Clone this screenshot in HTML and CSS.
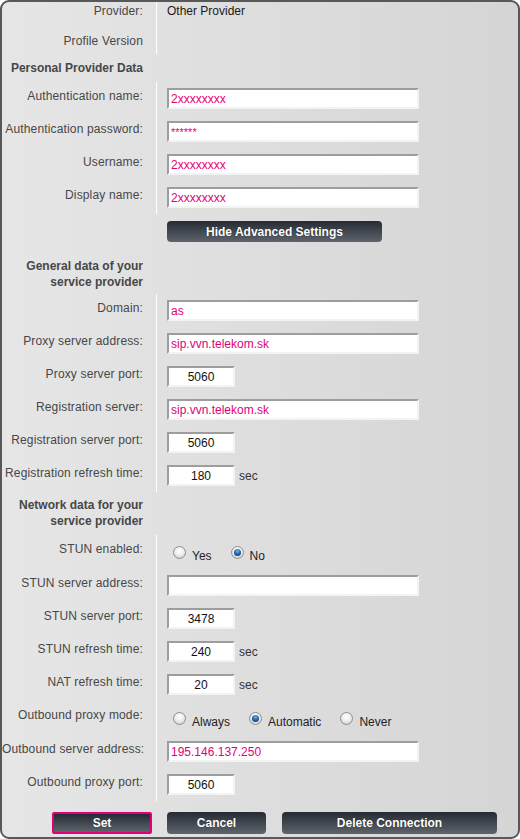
FILE: index.html
```html
<!DOCTYPE html>
<html>
<head>
<meta charset="utf-8">
<link rel="stylesheet" href="styles.css">
</head>
<body>
<div class="panel">
  <div class="row r1"><div class="lbl">Provider:</div><div class="val plain">Other Provider</div></div>
  <div class="row r2"><div class="lbl">Profile Version</div><div class="val plain"></div></div>

  <div class="head h1">Personal Provider Data</div>
  <div class="row"><div class="lbl">Authentication name:</div><div class="val"><input class="txt" type="text" value="2xxxxxxxx"></div></div>
  <div class="row"><div class="lbl">Authentication password:</div><div class="val"><input class="txt pw" type="text" value="******"></div></div>
  <div class="row"><div class="lbl">Username:</div><div class="val"><input class="txt" type="text" value="2xxxxxxxx"></div></div>
  <div class="row"><div class="lbl">Display name:</div><div class="val"><input class="txt" type="text" value="2xxxxxxxx"></div></div>

  <div class="btnrow"><button class="btn adv">Hide Advanced Settings</button></div>

  <div class="head h2">General data of your<br>service provider</div>
  <div class="row"><div class="lbl">Domain:</div><div class="val"><input class="txt" type="text" value="as"></div></div>
  <div class="row"><div class="lbl">Proxy server address:</div><div class="val"><input class="txt" type="text" value="sip.vvn.telekom.sk"></div></div>
  <div class="row"><div class="lbl">Proxy server port:</div><div class="val"><input class="num" type="text" value="5060"></div></div>
  <div class="row"><div class="lbl">Registration server:</div><div class="val"><input class="txt" type="text" value="sip.vvn.telekom.sk"></div></div>
  <div class="row"><div class="lbl">Registration server port:</div><div class="val"><input class="num" type="text" value="5060"></div></div>
  <div class="row"><div class="lbl">Registration refresh time:</div><div class="val"><input class="num" type="text" value="180"><span class="unit">sec</span></div></div>

  <div class="head h3">Network data for your<br>service provider</div>
  <div class="row rad"><div class="lbl">STUN enabled:</div><div class="val radios">
    <span class="opt"><span class="radio"></span><span class="otext">Yes</span></span>
    <span class="opt"><span class="radio on"></span><span class="otext">No</span></span>
  </div></div>
  <div class="row"><div class="lbl">STUN server address:</div><div class="val"><input class="txt" type="text" value=""></div></div>
  <div class="row"><div class="lbl">STUN server port:</div><div class="val"><input class="num" type="text" value="3478"></div></div>
  <div class="row"><div class="lbl">STUN refresh time:</div><div class="val"><input class="num" type="text" value="240"><span class="unit">sec</span></div></div>
  <div class="row"><div class="lbl">NAT refresh time:</div><div class="val"><input class="num" type="text" value="20"><span class="unit">sec</span></div></div>
  <div class="row rad"><div class="lbl">Outbound proxy mode:</div><div class="val radios">
    <span class="opt"><span class="radio"></span><span class="otext">Always</span></span>
    <span class="opt"><span class="radio on"></span><span class="otext">Automatic</span></span>
    <span class="opt"><span class="radio"></span><span class="otext">Never</span></span>
  </div></div>
  <div class="row"><div class="lbl">Outbound server address:</div><div class="val"><input class="txt" type="text" value="195.146.137.250"></div></div>
  <div class="row"><div class="lbl">Outbound proxy port:</div><div class="val"><input class="num" type="text" value="5060"></div></div>

  <div class="actions">
    <button class="btn set">Set</button>
    <button class="btn cancel">Cancel</button>
    <button class="btn del">Delete Connection</button>
  </div>
</div>
</body>
</html>
```
FILE: styles.css
```css
* { box-sizing: border-box; }
html, body { margin: 0; padding: 0; }
body {
  width: 520px;
  height: 839px;
  overflow: hidden;
  font-family: "Liberation Sans", Arial, sans-serif;
  font-size: 12px;
  background: #ffffff;
}
.panel {
  width: 520px;
  height: 839px;
  border: 2px solid #585858;
  border-radius: 9px;
  background: linear-gradient(to right, #e6e6e6, #d5d5d5);
  overflow: hidden;
}
.row {
  display: grid;
  grid-template-columns: 154px 1fr;
  height: 33px;
}
.row.rad { height: 34px; }
.row.r1 { height: 24px; }
.row.r2 { height: 28px; }
.lbl {
  text-align: right;
  padding-right: 13px;
  padding-top: 7px;
  line-height: 14px;
  color: #474747;
  white-space: nowrap;
  letter-spacing: 0.15px;
}
.r1 .lbl { padding-top: 2px; }
.r2 .lbl { padding-top: 8px; }
.val {
  border-left: 1px solid #ffffff;
  padding-left: 10px;
  padding-top: 6px;
  display: flex;
  align-items: flex-start;
}
.val.plain {
  line-height: 14px;
  color: #1a1a1a;
}
.r1 .val { padding-top: 2px; }
.head {
  width: 154px;
  padding-right: 13px;
  text-align: right;
  font-weight: bold;
  color: #474747;
  line-height: 16px;
}
.h1 { height: 28px; padding-top: 6px; }
.h2 { height: 43px; padding-top: 7px; }
.h3 { height: 43px; padding-top: 5px; }
input {
  display: block;
  margin: 0;
  height: 21px;
  border-style: solid;
  border-width: 2px;
  border-color: #9d9d9d #f3f3f3 #f3f3f3 #9d9d9d;
  background: #ffffff;
  font-family: "Liberation Sans", Arial, sans-serif;
  font-size: 12px;
  outline: none;
}
.txt {
  width: 252px;
  padding: 0 2px;
  color: #e2007a;
}
.txt.pw { font-size: 11px; }
.num {
  width: 68px;
  padding: 0;
  text-align: center;
  color: #111111;
}
.unit {
  margin-left: 4px;
  line-height: 21px;
  padding-top: 1px;
  color: #333333;
}
.btnrow {
  height: 37px;
  padding-top: 7px;
  padding-left: 165px;
}
.btn {
  display: block;
  height: 22px;
  margin: 0;
  padding: 0;
  border: 0;
  border-radius: 4px;
  background: linear-gradient(to bottom, #262b33, #5e646d);
  color: #ffffff;
  font-family: "Liberation Sans", Arial, sans-serif;
  font-size: 12px;
  font-weight: bold;
  text-shadow: 0 0 1px rgba(0,0,0,0.6);
}
.adv { width: 215px; height: 21px; }
.radios { padding-top: 11px; }
.opt {
  display: flex;
  align-items: flex-start;
  margin-right: 19px;
}
.radio {
  display: block;
  width: 13px;
  height: 13px;
  margin-left: 0;
  border-radius: 50%;
  border: 1px solid #8e8e8e;
  background: radial-gradient(circle at 50% 35%, #ffffff 0%, #eeeeee 45%, #c4c4c4 100%);
  position: relative;
}
.opt:first-child .radio { margin-left: 6px; }
.radio.on::after {
  content: "";
  position: absolute;
  left: 2px;
  top: 2px;
  width: 7px;
  height: 7px;
  border-radius: 50%;
  background: radial-gradient(circle at 50% 30%, #6fb2ea 0%, #1b5d9c 55%, #0c3560 100%);
}
.otext {
  margin-left: 6px;
  margin-top: 3px;
  line-height: 14px;
  color: #222222;
}
.actions {
  display: flex;
  padding-top: 11px;
  padding-left: 50px;
}
.set {
  width: 100px;
  border: 2px solid #e2007a;
  border-radius: 2px;
}
.cancel { width: 99px; margin-left: 15px; }
.del { width: 215px; margin-left: 16px; }
```
